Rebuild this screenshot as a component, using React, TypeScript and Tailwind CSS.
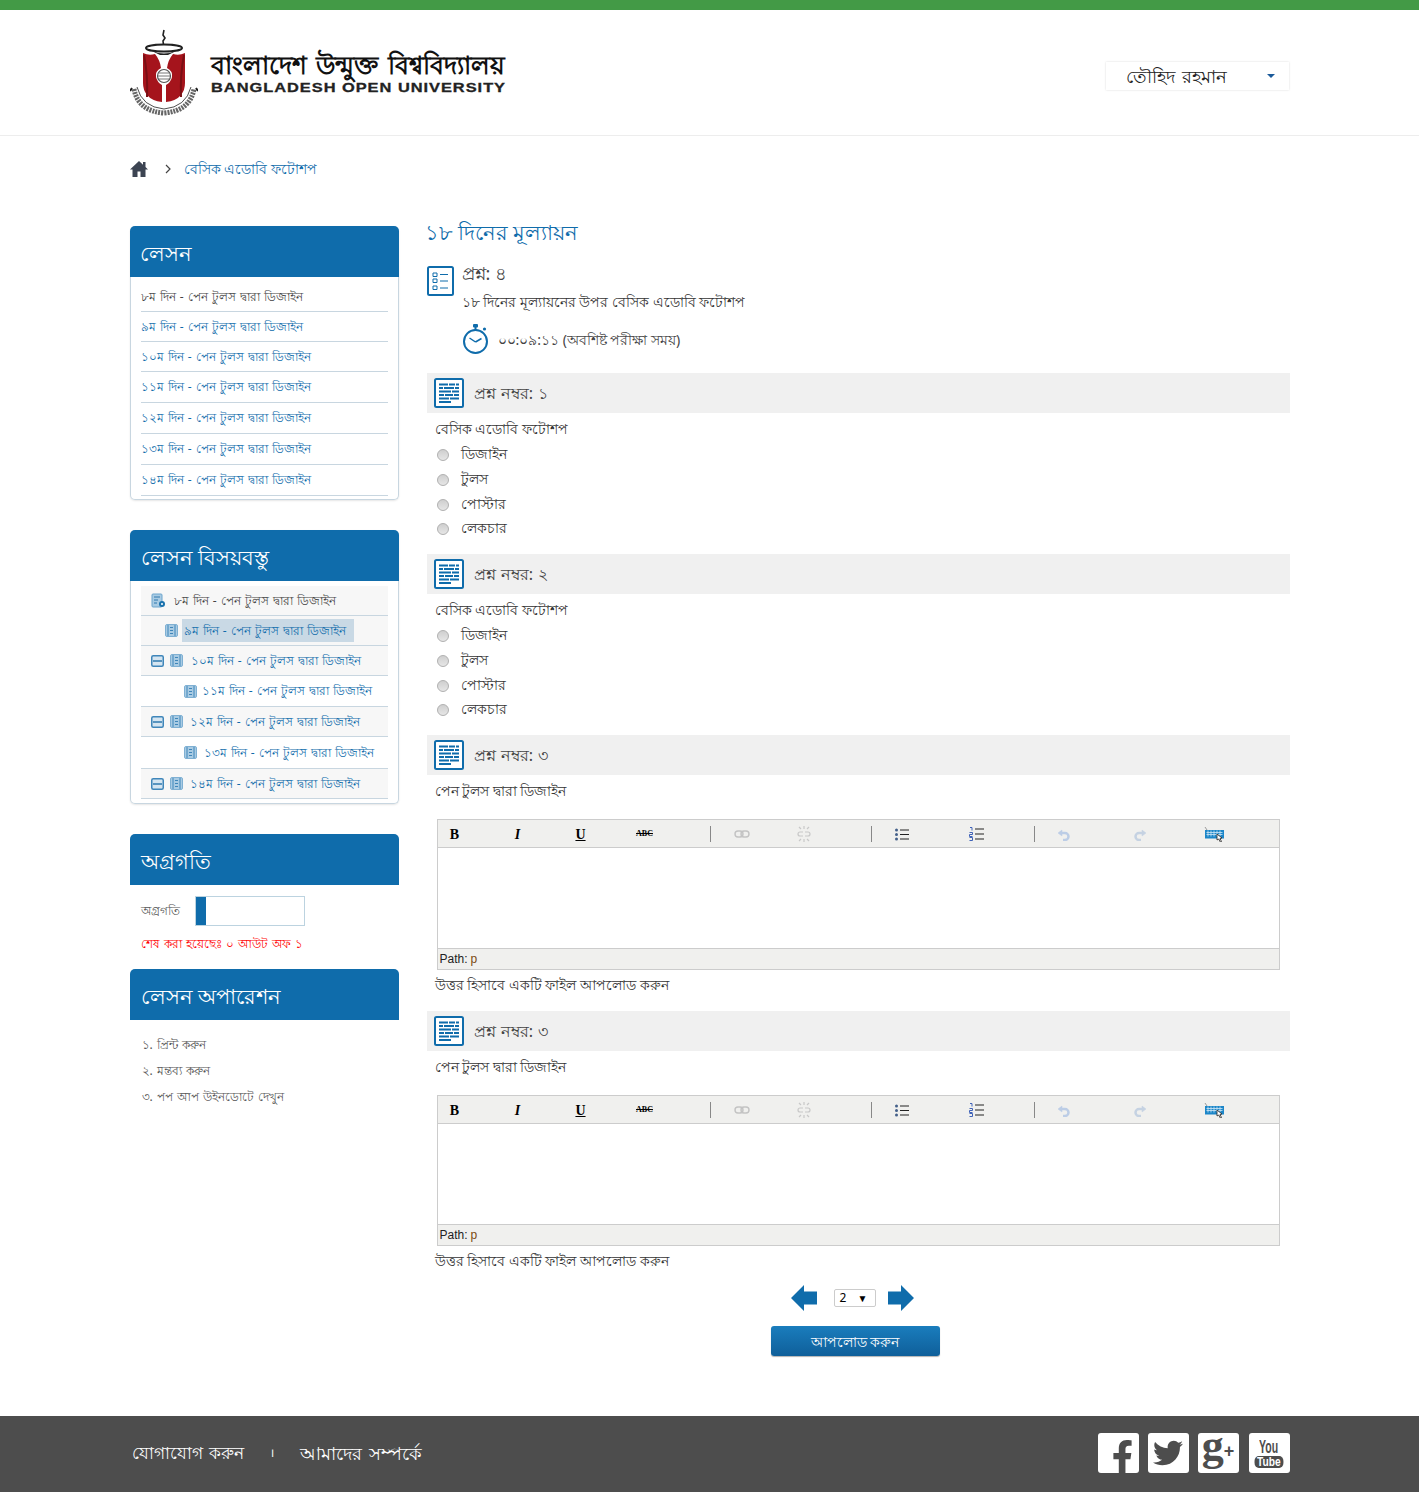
import React from "react";
import { FaFacebookF, FaTwitter } from "react-icons/fa";

const lessons = ["৮ম দিন", "৯ম দিন", "১০ম দিন", "১১ম দিন", "১২ম দিন", "১৩ম দিন", "১৪ম দিন"].map(
  (d) => `${d} - পেন টুলস দ্বারা ডিজাইন`
);

function Emblem() {
  return (
    <svg width="68" height="88" viewBox="0 0 68 88" className="shrink-0">
      <path d="M34 1l-1 5 2 3-2 3 1 8" stroke="#222" strokeWidth="1.6" fill="none" />
      <ellipse cx="34" cy="19" rx="18" ry="3.5" fill="#fff" stroke="#222" strokeWidth="2" />
      <path d="M20 21q14 7 28 0l-10 5h-8z" fill="#222" />
      <path d="M13 24q6 3 12 1 5 6 6 14-6 3-5 9 1 5 6 8v17q-10-1-15-7-4-5-4-12z" fill="#a5141c" />
      <path d="M55 24q-6 3-12 1-5 6-6 14 6 3 5 9-1 5-6 8v17q10-1 15-7 4-5 4-12z" fill="#a5141c" />
      <path d="M14 26q4 20 3 42M54 26q-4 20-3 42" stroke="#7a0f14" strokeWidth="2" fill="none" />
      <circle cx="34" cy="47" r="6.5" fill="#fff" stroke="#555" strokeWidth="1.2" />
      <path d="M28 47h12M29 44h10M29 50h10" stroke="#555" strokeWidth="0.8" />
      <path d="M4 60q4 22 30 24 26-2 30-24" fill="none" stroke="#666" strokeWidth="5" strokeDasharray="2 1" />
      <path d="M7 58q5 20 27 22 22-2 27-22" fill="none" stroke="#222" strokeWidth="0.8" />
      <path d="M2 59l-2 3M66 59l2 3" stroke="#222" strokeWidth="2" />
    </svg>
  );
}

function Logo() {
  return (
    <div className="flex items-start">
      <Emblem />
      <div className="ml-[13px] mt-[19px] w-[296px]">
        <div className="text-[25px] leading-[32px] font-bold text-[#111] whitespace-nowrap [word-spacing:3px]">বাংলাদেশ উন্মুক্ত বিশ্ববিদ্যালয়</div>
        <div className="text-[13.5px] leading-[14px] mt-[1px] font-bold text-[#222] whitespace-nowrap tracking-[0.8px] font-['Liberation_Sans',sans-serif] scale-x-[1.215] origin-left [-webkit-text-stroke:0.3px_#222]">BANGLADESH OPEN UNIVERSITY</div>
      </div>
    </div>
  );
}

function PanelHead({ children, cls }: { children: React.ReactNode; cls?: string }) {
  return (
    <div className={`h-[51px] bg-[#0f6cab] rounded-t-[5px] text-white text-[21px] px-[11px] pt-[5px] flex items-center ${cls ?? ""}`}>{children}</div>
  );
}

function BookIcon() {
  return (
    <svg width="13" height="13" viewBox="0 0 13 13" className="shrink-0">
      <rect x="0.5" y="0.5" width="12" height="12" rx="1.5" fill="#a9cbe3" stroke="#7fb0d3" />
      <path d="M3 1v11M10 1v11M5 3.5h3M5 6.5h3M5 9.5h3" stroke="#3f86ba" strokeWidth="1" />
    </svg>
  );
}

function MinusIcon() {
  return (
    <svg width="13" height="12" viewBox="0 0 13 12" className="shrink-0">
      <rect x="0.75" y="0.75" width="11.5" height="10.5" rx="1.5" fill="#d5e5f1" stroke="#3f86ba" strokeWidth="1.5" />
      <path d="M2 6h9" stroke="#2e78ae" strokeWidth="1.5" />
    </svg>
  );
}

function GearDocIcon() {
  return (
    <svg width="15" height="15" viewBox="0 0 15 15" className="shrink-0">
      <rect x="1" y="1" width="10" height="13" rx="1" fill="#a9cbe3" stroke="#6da5cd" />
      <path d="M3 4h6M3 7h4M3 10h3" stroke="#2e78ae" strokeWidth="1" />
      <circle cx="11" cy="11" r="3" fill="#1a72ad" />
      <circle cx="11" cy="11" r="1" fill="#fff" />
    </svg>
  );
}

function Tree({ pad, bg, minus, gear, active, gapCls, h, text }: { pad: string; bg?: boolean; minus?: boolean; gear?: boolean; active?: boolean; gapCls: string; h: string; text: string }) {
  return (
    <div className={`${h} flex items-center border-b border-[#c8d6e0] ${pad} ${bg ? "bg-[#f7f7f7]" : ""} text-[12px] [word-spacing:1px] whitespace-nowrap ${gear ? "text-[#444]" : "text-[#0f6cab]"}`}>
      {minus && <span className="mr-[6px] flex"><MinusIcon /></span>}
      {gear ? <GearDocIcon /> : <BookIcon />}
      <span className={`${gapCls} ${active ? "bg-[#c9d9e5] h-[23px] flex items-center px-[2px] w-[172px]" : ""}`}>{text}</span>
    </div>
  );
}

function ListIcon() {
  return (
    <svg width="27" height="30" viewBox="0 0 27 30" className="shrink-0">
      <rect x="1" y="1" width="25" height="28" rx="1.5" fill="#fff" stroke="#0f6cab" strokeWidth="2" />
      <path d="M6 7h4v3.5H6zM6 13h4v3.5H6zM6 20h4v3.5H6z" fill="none" stroke="#0f6cab" />
      <path d="M13 8.5h8M13 15h8M13 22h8" stroke="#0f6cab" />
    </svg>
  );
}

function ClockIcon() {
  return (
    <svg width="28" height="32" viewBox="0 0 28 32" className="shrink-0">
      <circle cx="13.5" cy="18.5" r="11.5" fill="#fff" stroke="#0f6cab" strokeWidth="2" />
      <rect x="11" y="1" width="5" height="3.5" rx="1" fill="#0f6cab" />
      <rect x="12.5" y="4" width="2" height="3" fill="#0f6cab" />
      <circle cx="22.5" cy="6" r="1.6" fill="#0f6cab" />
      <path d="M13.5 19l-6-4M13.5 19l6-3.5" stroke="#0f6cab" strokeWidth="1.5" fill="none" />
    </svg>
  );
}

function QIcon() {
  return (
    <svg width="30" height="30" viewBox="0 0 30 30" className="shrink-0">
      <rect x="1" y="1" width="28" height="28" rx="1.5" fill="#fff" stroke="#0f6cab" strokeWidth="2" />
      <path d="M5 6.5h9M15 6.5h6M22 6.5h3M5 10h4M10 10h10M21 10h4M5 13.5h12M18 13.5h7M5 17h5M11 17h8M20 17h5M5 20.5h10M16 20.5h9M5 24h12" stroke="#0f6cab" strokeWidth="2" />
    </svg>
  );
}

function QHead({ n }: { n: string }) {
  return (
    <div className="h-10 bg-[#f0f0f0] flex items-center pl-[7px] text-[16px] [word-spacing:1px] text-[#444]">
      <QIcon />
      <span className="ml-[10px]">প্রশ্ন নম্বর: {n}</span>
    </div>
  );
}

function Radio({ label, cls }: { label: string; cls: string }) {
  return (
    <div className={`flex items-center pl-[10px] text-[14px] text-[#333] ${cls}`}>
      <span className="w-3 h-3 rounded-full border border-[#b0b0b0] bg-gradient-to-b from-[#cfcfcf] to-[#e6e6e6] shrink-0" />
      <span className="ml-[12px] leading-[20px] -mt-[2px]">{label}</span>
    </div>
  );
}

function McqQuestion({ n }: { n: string }) {
  return (
    <div>
      <QHead n={n} />
      <div className="pl-2 mt-[6px] text-[14px] leading-[20px] text-[#333]">বেসিক এডোবি ফটোশপ</div>
      <div className="mt-[6px] h-[108px] flex flex-col">
        <Radio label="ডিজাইন" cls="h-[20px]" />
        <Radio label="টুলস" cls="h-[20px] mt-[5px]" />
        <Radio label="পোস্টার" cls="h-[20px] mt-[5px]" />
        <Radio label="লেকচার" cls="h-[20px] mt-[4px]" />
      </div>
    </div>
  );
}

function Sep({ cls }: { cls: string }) {
  return <span className={`w-px h-[16px] bg-[#888] shrink-0 ${cls}`} />;
}

function Tool({ cls, children }: { cls: string; children: React.ReactNode }) {
  return <span className={`w-6 h-5 flex items-center justify-center shrink-0 ${cls}`}>{children}</span>;
}

function Toolbar() {
  const serif = "font-['Liberation_Serif',serif] font-bold text-black";
  return (
    <div className="h-[28px] pt-px bg-[#f0f0ee] border-b border-[#ccc] flex items-center">
      <Tool cls="ml-[5px]"><span className={`${serif} text-[14px]`}>B</span></Tool>
      <Tool cls="ml-[39px]"><span className={`${serif} text-[14px] italic`}>I</span></Tool>
      <Tool cls="ml-[39px]"><span className={`${serif} text-[14px] underline`}>U</span></Tool>
      <Tool cls="ml-[40px]"><span className={`${serif} text-[8px] line-through`}>ABC</span></Tool>
      <Sep cls="ml-[53px]" />
      <Tool cls="ml-[19px]">
        <svg width="16" height="8" viewBox="0 0 16 8" fill="none" stroke="#c3c3c3" strokeWidth="1.4"><rect x="1" y="1" width="8" height="6" rx="3" /><rect x="7" y="1" width="8" height="6" rx="3" /></svg>
      </Tool>
      <Tool cls="ml-[38px]">
        <svg width="16" height="16" viewBox="0 0 16 16" fill="none" stroke="#c8c8c8" strokeWidth="1.2"><path d="M7 6H4a2 2 0 000 4h3M9 6h3a2 2 0 010 4H9M8 0v3M8 13v3M3 1l2 2M13 1l-2 2M3 15l2-2M13 15l-2-2" /></svg>
      </Tool>
      <Sep cls="ml-[55px]" />
      <Tool cls="ml-[18px]">
        <svg width="14" height="13" viewBox="0 0 14 13"><path d="M5 2h9M5 6.5h9M5 11h9" stroke="#222" /><circle cx="1.5" cy="2" r="1.5" fill="#44608a" /><circle cx="1.5" cy="6.5" r="1.5" fill="#44608a" /><circle cx="1.5" cy="11" r="1.5" fill="#44608a" /></svg>
      </Tool>
      <Tool cls="ml-[51px]">
        <svg width="15" height="14" viewBox="0 0 15 14"><path d="M6 2h9M6 7h9M6 12h9" stroke="#222" /><path d="M1 0.5h2v3M0.5 5.5h3v2h-3v2h3M0.5 10.5h3v3h-3" stroke="#3f62b8" fill="none" /></svg>
      </Tool>
      <Sep cls="ml-[45px]" />
      <Tool cls="ml-[17px]">
        <svg width="13" height="13" viewBox="0 0 13 13" fill="none" stroke="#bccde6" strokeWidth="2.5"><path d="M3 5h5a3.5 3.5 0 010 7H6" /><path d="M1 5l4-3v6z" fill="#bccde6" strokeWidth="0.5" /></svg>
      </Tool>
      <Tool cls="ml-[53px]">
        <svg width="13" height="13" viewBox="0 0 13 13" fill="none" stroke="#c5d2e2" strokeWidth="2.5"><path d="M10 5H5a3.5 3.5 0 000 7h2" /><path d="M12 5L8 2v6z" fill="#c5d2e2" strokeWidth="0.5" /></svg>
      </Tool>
      <Tool cls="ml-[49px]">
        <svg width="20" height="15" viewBox="0 0 20 15"><path d="M1 0l2 3" stroke="#777" strokeWidth="0.7" /><rect x="1" y="3" width="19" height="8.5" fill="#1c86c8" /><path d="M2.5 5.5h16M2.5 7.5h16M4 3.5v6M7 3.5v6M10 3.5v6M13 3.5v6M16 3.5v6" stroke="#cfe7f6" strokeWidth="0.8" /><path d="M13 7l5 4-2 .5 1.5 3-1.2.5-1.5-3L13 13z" fill="#fff" stroke="#222" strokeWidth="0.8" /></svg>
      </Tool>
    </div>
  );
}

function Editor({ n }: { n: string }) {
  return (
    <div className="pb-[15px]">
      <QHead n={n} />
      <div className="pl-2 mt-[6px] text-[14px] leading-[20px] text-[#333]">পেন টুলস দ্বারা ডিজাইন</div>
      <div className="ml-[10px] w-[843px] mt-[18px] border border-[#ccc] bg-white">
        <Toolbar />
        <div className="h-[100px]" />
        <div className="h-[21px] bg-[#f0f0ee] border-t border-[#ccc] flex items-center pl-[2px] text-[12px] font-['Liberation_Sans',sans-serif] text-[#222]">
          Path:<span className="ml-[3px] text-[#7a4a10]">p</span>
        </div>
      </div>
      <div className="pl-2 mt-[5px] text-[14px] leading-[20px] text-[#333]">উত্তর হিসাবে একটি ফাইল আপলোড করুন</div>
    </div>
  );
}

function Social({ cls, children }: { cls?: string; children: React.ReactNode }) {
  return <div className={`w-[41px] h-[40px] rounded-[3px] bg-white text-[#4d4d4d] flex items-center justify-center ${cls ?? ""}`}>{children}</div>;
}

export default function App() {
  return (
    <div className="min-h-[1492px] bg-white flex flex-col font-['Noto_Sans','Liberation_Sans',sans-serif]">
      <div className="h-[10px] bg-[#439a46]" />
      <header className="h-[126px] border-b border-[#ededed]">
        <div className="w-[1160px] mx-auto flex justify-between items-start pt-[19px]">
          <Logo />
          <div className="mt-[33px] mr-[1px] w-[183px] h-[28px] bg-white shadow-[0_0_2px_rgba(0,0,0,0.15)] flex items-center pl-[20px] pr-[14px] justify-between text-[18px] [word-spacing:3px] text-[#222]">
            <span>তৌহিদ রহমান</span>
            <span className="w-0 h-0 border-x-[4px] border-x-transparent border-t-[4px] border-t-[#1a5a9a]" />
          </div>
        </div>
      </header>

      <div className="w-[1160px] mx-auto flex-1">
        <div className="h-[90px] pt-[23px] flex items-start">
          <div className="flex items-center h-5">
            <svg width="18" height="16" viewBox="0 0 18 16" className="shrink-0"><path d="M9 0l4 3.7V1h2.5v5L18 8.5h-2.5V16h-5v-5.5h-3V16h-5V8.5H0z" fill="#3c4452" /></svg>
            <svg width="6" height="10" viewBox="0 0 6 10" className="ml-[17px]"><path d="M1 1l4 4-4 4" fill="none" stroke="#444" strokeWidth="1.2" /></svg>
            <span className="ml-[13px] text-[14.3px] text-[#0f6cab]">বেসিক এডোবি ফটোশপ</span>
          </div>
        </div>

        <div className="flex items-start">
          <aside className="w-[269px] shrink-0">
            <section className="border-x border-b border-[#c8d6e0] rounded-[5px] shadow-[0_1px_2px_rgba(0,0,0,0.1)]">
              <div className="-mx-px"><PanelHead cls="!px-[10px]">লেসন</PanelHead></div>
              <div className="px-[10px] pb-[3px]">
                {lessons.map((t, i) => (
                  <div key={t} className={`${i === 0 ? "h-[35px] pt-[5px]" : i < 3 ? "h-[30px]" : "h-[31px]"} flex items-center border-b border-[#c8d6e0] text-[12px] [word-spacing:1px] whitespace-nowrap ${i === 0 ? "text-[#444]" : "text-[#0f6cab]"}`}>{t}</div>
                ))}
              </div>
            </section>

            <section className="mt-[30px] border-x border-b border-[#c8d6e0] rounded-[5px] shadow-[0_1px_2px_rgba(0,0,0,0.1)]">
              <div className="-mx-px"><PanelHead>লেসন বিসয়বস্তু</PanelHead></div>
              <div className="px-[10px] pt-[5px] pb-[4px]">
                <Tree h="h-[30px]" bg gear pad="pl-[10px]" gapCls="ml-[8px]" text={lessons[0]} />
                <Tree h="h-[30px]" bg active pad="pl-[24px]" gapCls="ml-[4px]" text={lessons[1]} />
                <Tree h="h-[30px]" bg minus pad="pl-[10px]" gapCls="ml-[8px]" text={lessons[2]} />
                <Tree h="h-[31px]" pad="pl-[43px]" gapCls="ml-[5px]" text={lessons[3]} />
                <Tree h="h-[30px]" bg minus pad="pl-[10px]" gapCls="ml-[7px]" text={lessons[4]} />
                <Tree h="h-[32px]" pad="pl-[43px]" gapCls="ml-[7px]" text={lessons[5]} />
                <Tree h="h-[30px]" bg minus pad="pl-[10px]" gapCls="ml-[7px]" text={lessons[6]} />
              </div>
            </section>

            <section className="mt-[30px]">
              <PanelHead>অগ্রগতি</PanelHead>
              <div className="h-[84px] pl-[11px] pt-[11px]">
                <div className="flex items-center">
                  <span className="w-[54px] text-[12px] text-[#555]">অগ্রগতি</span>
                  <div className="w-[110px] h-[30px] border border-[#bcd3e0] bg-white">
                    <div className="w-[10px] h-full bg-[#0f6cab]" />
                  </div>
                </div>
                <div className="mt-[8px] text-[12px] [word-spacing:1px] leading-[20px] text-[#f00]">শেষ করা হয়েছেঃ ০ আউট অফ ১</div>
              </div>
            </section>

            <section>
              <PanelHead>লেসন অপারেশন</PanelHead>
              <ol className="pl-[12px] pt-[12px] text-[12px] [word-spacing:1px] text-[#555] leading-[26px]">
                <li>১. প্রিন্ট করুন</li>
                <li>২. মন্তব্য করুন</li>
                <li>৩. পপ আপ উইনডোটে দেখুন</li>
              </ol>
            </section>
          </aside>

          <main className="ml-[28px] w-[863px]">
            <h1 className="text-[21px] leading-[30px] text-[#0f6cab] -mt-[9px] -ml-[2px]">১৮ দিনের মূল্যায়ন</h1>
            <div className="flex mt-[19px]">
              <ListIcon />
              <div className="ml-[9px] -translate-x-px">
                <div className="text-[18px] leading-[20px] -mt-[3px] text-[#444]">প্রশ্ন: ৪</div>
                <div className="mt-[9px] text-[14px] leading-[20px] text-[#333]">১৮ দিনের মূল্যায়নের উপর বেসিক এডোবি ফটোশপ</div>
                <div className="mt-[11px] flex items-center">
                  <ClockIcon />
                  <span className="ml-[8px] text-[14px] text-[#444]">০০:০৯:১১ (অবশিষ্ট পরীক্ষা সময়)</span>
                </div>
              </div>
            </div>
            <div className="mt-[18px] flex flex-col gap-[1px]">
              <McqQuestion n="১" />
              <McqQuestion n="২" />
              <Editor n="৩" />
              <Editor n="৩" />
            </div>

            <div className="-mt-px flex flex-col items-center">
              <div className="flex items-center h-[26px] -ml-[12px]">
                <svg width="26" height="26" viewBox="0 0 26 26"><path d="M0 13L13 0v6.5h13v13H13V26z" fill="#0f6cab" /></svg>
                <div className="ml-[17px] w-[42px] h-[18px] border border-[#ccc] rounded-[2px] bg-white flex items-center justify-between pl-[5px] pr-[7px] text-[12px] text-black">
                  <span>2</span><span className="text-[10px]">▼</span>
                </div>
                <svg width="26" height="26" viewBox="0 0 26 26" className="ml-[12px]"><path d="M26 13L13 0v6.5H0v13h13V26z" fill="#0f6cab" /></svg>
              </div>
              <button className="mt-[15px] -ml-[6px] w-[169px] h-[30px] rounded-[3px] bg-gradient-to-b from-[#1a7dbd] to-[#0f5f9a] text-white text-[14px] shadow-[0_1px_1px_rgba(0,0,0,0.3)]">আপলোড করুন</button>
            </div>
          </main>
        </div>
      </div>

      <footer className="h-[76px] bg-[#4d4d4d]">
        <div className="w-[1160px] mx-auto h-full pb-[2px] flex items-center justify-between text-white text-[17px] [word-spacing:2px]">
          <div className="flex items-center pl-[2px]">
            <span>যোগাযোগ করুন</span>
            <span className="ml-[26px] text-[12px]">।</span>
            <span className="ml-[26px] text-[17.5px]">আমাদের সম্পর্কে</span>
          </div>
          <div className="flex">
            <Social cls="overflow-hidden"><FaFacebookF className="text-[34px] mt-[8px] ml-[8px]" /></Social>
            <Social cls="ml-[9px]"><FaTwitter className="text-[30px]" /></Social>
            <Social cls="ml-[9px]">
              <span className="font-['Liberation_Serif',serif] font-bold text-[44px] leading-[40px] -mt-[14px]">g</span>
              <span className="font-['Liberation_Sans',sans-serif] font-bold text-[18px] leading-none -mt-[4px]">+</span>
            </Social>
            <Social cls="ml-[10px]">
              <div className="flex flex-col items-center font-['Liberation_Sans',sans-serif] font-bold leading-none">
                <span className="text-[15px] scale-x-[0.7] scale-y-[1.2]">You</span>
                <span className="text-[12px] bg-[#4d4d4d] text-white rounded-[5px] px-[3px] mt-[2px] scale-x-[0.85]">Tube</span>
              </div>
            </Social>
          </div>
        </div>
      </footer>
    </div>
  );
}
